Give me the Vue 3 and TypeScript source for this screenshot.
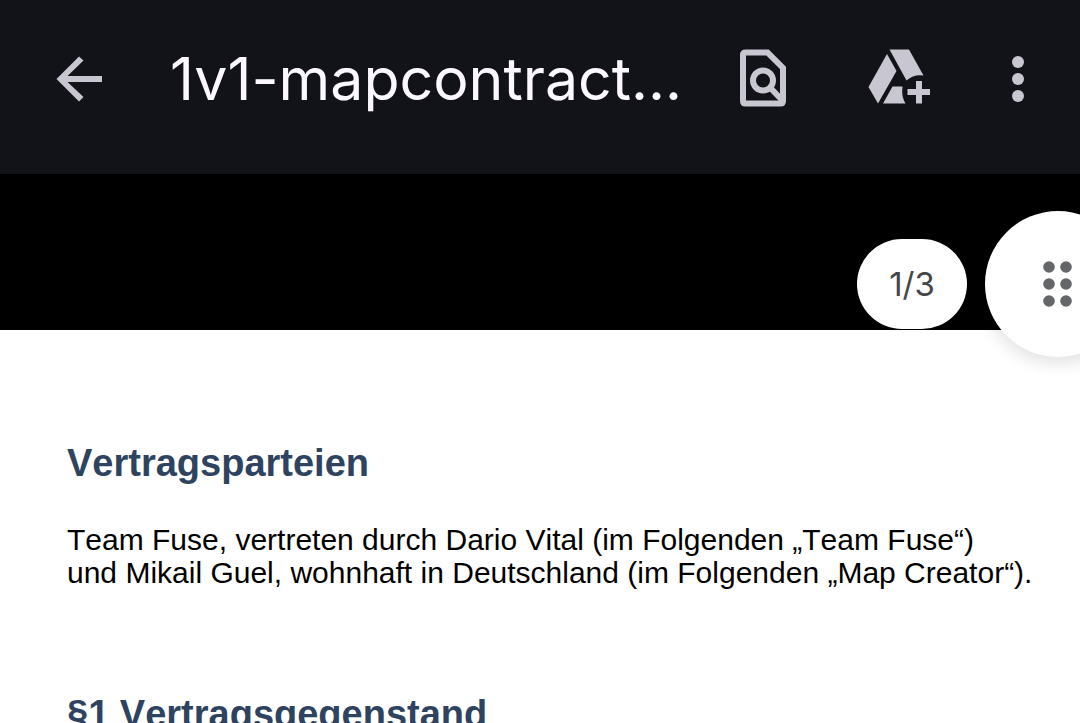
<script setup lang="ts">
import { ref } from 'vue'

interface Section {
  title: string
  lines: string[]
}

const fileName = '1v1-mapcontract...'
const page = ref(1)
const pageCount = 3

const sections: Section[] = [
  {
    title: 'Vertragsparteien',
    lines: [
      'Team Fuse, vertreten durch Dario Vital (im Folgenden „Team Fuse“)',
      'und Mikail Guel, wohnhaft in Deutschland (im Folgenden „Map Creator“).',
    ],
  },
  { title: '§1 Vertragsgegenstand', lines: [] },
]
</script>

<template>
  <div class="viewer">
    <header class="bar">
      <button class="icon back" type="button" aria-label="Zurück">
        <svg viewBox="0 0 68 68">
          <path d="M57 31H22.500L38.500 15.500L34 11.500L11.500 34L34 56.500L38.500 52L22.500 37H57z" />
        </svg>
      </button>
      <h1 class="title">{{ fileName }}</h1>
      <button class="icon" type="button" aria-label="In Datei suchen">
        <svg viewBox="0 0 68 68">
          <path
            class="line"
            d="M17 7.500H38.500L54 23V56Q54 58.500 51.500 58.500H16.500Q14 58.500 14 56V10Q14 7.500 16.500 7.500z"
          />
          <circle class="line" cx="34" cy="35.500" r="10" />
          <path class="line" d="M41 42.500L53 55" />
        </svg>
      </button>
      <button class="icon drive" type="button" aria-label="Zu Drive hinzufügen">
        <svg viewBox="0 0 68 68">
          <path
            d="M24.500 4.500H44L58.500 30.500Q49 29 41.500 35.500zM22 9L31.500 26L13 58.500L3.500 42zM27.500 41.500H37.500Q36 51 40.500 58.500H18z"
          />
          <path d="M51 36H57V44H65V50H57V58.500H51V50H42.500V44H51z" />
        </svg>
      </button>
      <button class="icon more" type="button" aria-label="Weitere Optionen">
        <svg viewBox="0 0 68 68">
          <circle cx="34" cy="17" r="6" />
          <circle cx="34" cy="34" r="6" />
          <circle cx="34" cy="51" r="6" />
        </svg>
      </button>
    </header>

    <main class="stage">
      <div class="overlay">
        <output class="pages">{{ page }}/{{ pageCount }}</output>
        <button class="handle" type="button" aria-label="Schnell scrollen">
          <svg viewBox="0 0 32 48">
            <circle cx="7" cy="7" r="5.800" />
            <circle cx="24" cy="7" r="5.800" />
            <circle cx="7" cy="24" r="5.800" />
            <circle cx="24" cy="24" r="5.800" />
            <circle cx="7" cy="41" r="5.800" />
            <circle cx="24" cy="41" r="5.800" />
          </svg>
        </button>
      </div>
      <article class="sheet">
        <section v-for="section in sections" :key="section.title" class="section">
          <h2>{{ section.title }}</h2>
          <p v-if="section.lines.length">
            <template v-for="(line, i) in section.lines" :key="i"><br v-if="i > 0" />{{ line }}</template>
          </p>
        </section>
      </article>
    </main>
  </div>
</template>

<style>
html,
body {
  margin: 0;
  background: #000;
}
</style>

<style scoped>
.viewer {
  display: flex;
  flex-direction: column;
  height: 100vh;
  overflow: hidden;
  background: #000;
}

.bar {
  display: flex;
  align-items: center;
  padding: 43px 28px 59px 45px;
  background: #121318;
}

.icon {
  flex: none;
  width: 68px;
  height: 68px;
  padding: 0;
  border: 0;
  background: none;
}

.icon svg {
  display: block;
  width: 100%;
  height: 100%;
  fill: #c8c6d0;
}

.icon .line {
  fill: none;
  stroke: #c8c6d0;
  stroke-width: 6px;
}

.title {
  flex: 1;
  min-width: 0;
  margin: 0 0 0 57px;
  overflow: hidden;
  color: #fbf8ff;
  font: 400 59px/72px Inter, Roboto, sans-serif;
  white-space: nowrap;
}

.drive {
  margin-left: 68px;
}

.more {
  margin-left: 51px;
}

.stage {
  position: relative;
  flex: 1;
  min-height: 0;
  padding-top: 156px;
  overflow: hidden;
}

.overlay {
  position: absolute;
  top: 37px;
  right: -51px;
  display: flex;
  align-items: center;
  gap: 18px;
}

.pages {
  width: 110px;
  border-radius: 45px;
  background: #fff;
  color: #444649;
  font: 400 33px/90px Inter, Roboto, sans-serif;
  text-align: center;
}

.handle {
  display: grid;
  place-items: center;
  width: 146px;
  height: 146px;
  padding: 0;
  border: 0;
  border-radius: 50%;
  background: #fff;
  box-shadow: 0 6px 18px rgba(0, 0, 0, 0.12);
}

.handle svg {
  width: 32px;
  height: 48px;
  fill: #646669;
}

.sheet {
  min-height: 100%;
  padding: 110px 40px 0 67px;
  background: #fff;
  font-family: "Liberation Sans", Arial, sans-serif;
  font-kerning: none;
}

.section + .section {
  margin-top: 102px;
}

h2 {
  margin: 0;
  color: #2e4360;
  font-size: 38px;
  line-height: 46px;
}

p {
  margin: 37px 0 0;
  color: #000;
  font-size: 30px;
  line-height: 33px;
  white-space: nowrap;
}
</style>
